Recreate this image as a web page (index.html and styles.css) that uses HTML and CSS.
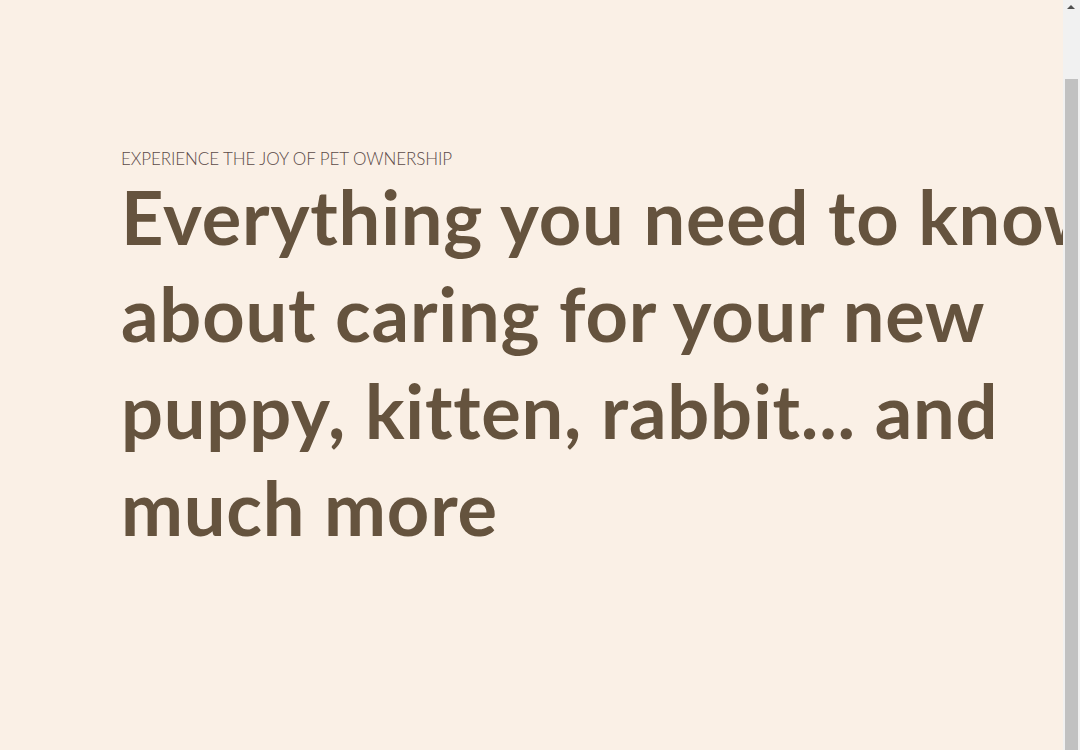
FILE: index.html
```html
<!DOCTYPE html>
<html lang="en">
<head>
<meta charset="utf-8">
<title>Pet ownership</title>
<link rel="stylesheet" href="styles.css">
</head>
<body>
<main class="hero">
  <p class="eyebrow">EXPERIENCE THE JOY OF PET OWNERSHIP</p>
  <h1 class="title">Everything you need to know about caring for your new puppy, kitten, rabbit... and much more</h1>
</main>
<div class="scrollbar" aria-hidden="true">
  <div class="scroll-arrow"></div>
  <div class="scroll-thumb"></div>
</div>
</body>
</html>
```

FILE: styles.css
```css
html, body {
  margin: 0;
  padding: 0;
  overflow: hidden;
  background: #faf0e6;
}
body {
  height: 750px;
  font-family: Lato, "Open Sans", sans-serif;
}
.hero {
  padding: 148px 0 0 121px;
}
.eyebrow {
  margin: 0;
  font-size: 17px;
  font-weight: 300;
  letter-spacing: -0.1px;
  color: #5b4a48;
  line-height: 22px;
}
.title {
  margin: -2px 0 0;
  font-size: 74px;
  font-weight: 700;
  letter-spacing: 0.8px;
  line-height: 97px;
  color: #65533e;
  width: 985px;
}
.scrollbar {
  position: fixed;
  top: 0;
  right: 0;
  width: 17px;
  height: 100%;
  background: #f1f1f1;
}
.scroll-arrow {
  position: absolute;
  top: 5px;
  left: 4px;
  width: 0;
  height: 0;
  border-left: 4px solid transparent;
  border-right: 4px solid transparent;
  border-bottom: 4px solid #505050;
}
.scroll-thumb {
  position: absolute;
  top: 79px;
  left: 2px;
  width: 13px;
  bottom: 0;
  background: #c1c1c1;
}
```
